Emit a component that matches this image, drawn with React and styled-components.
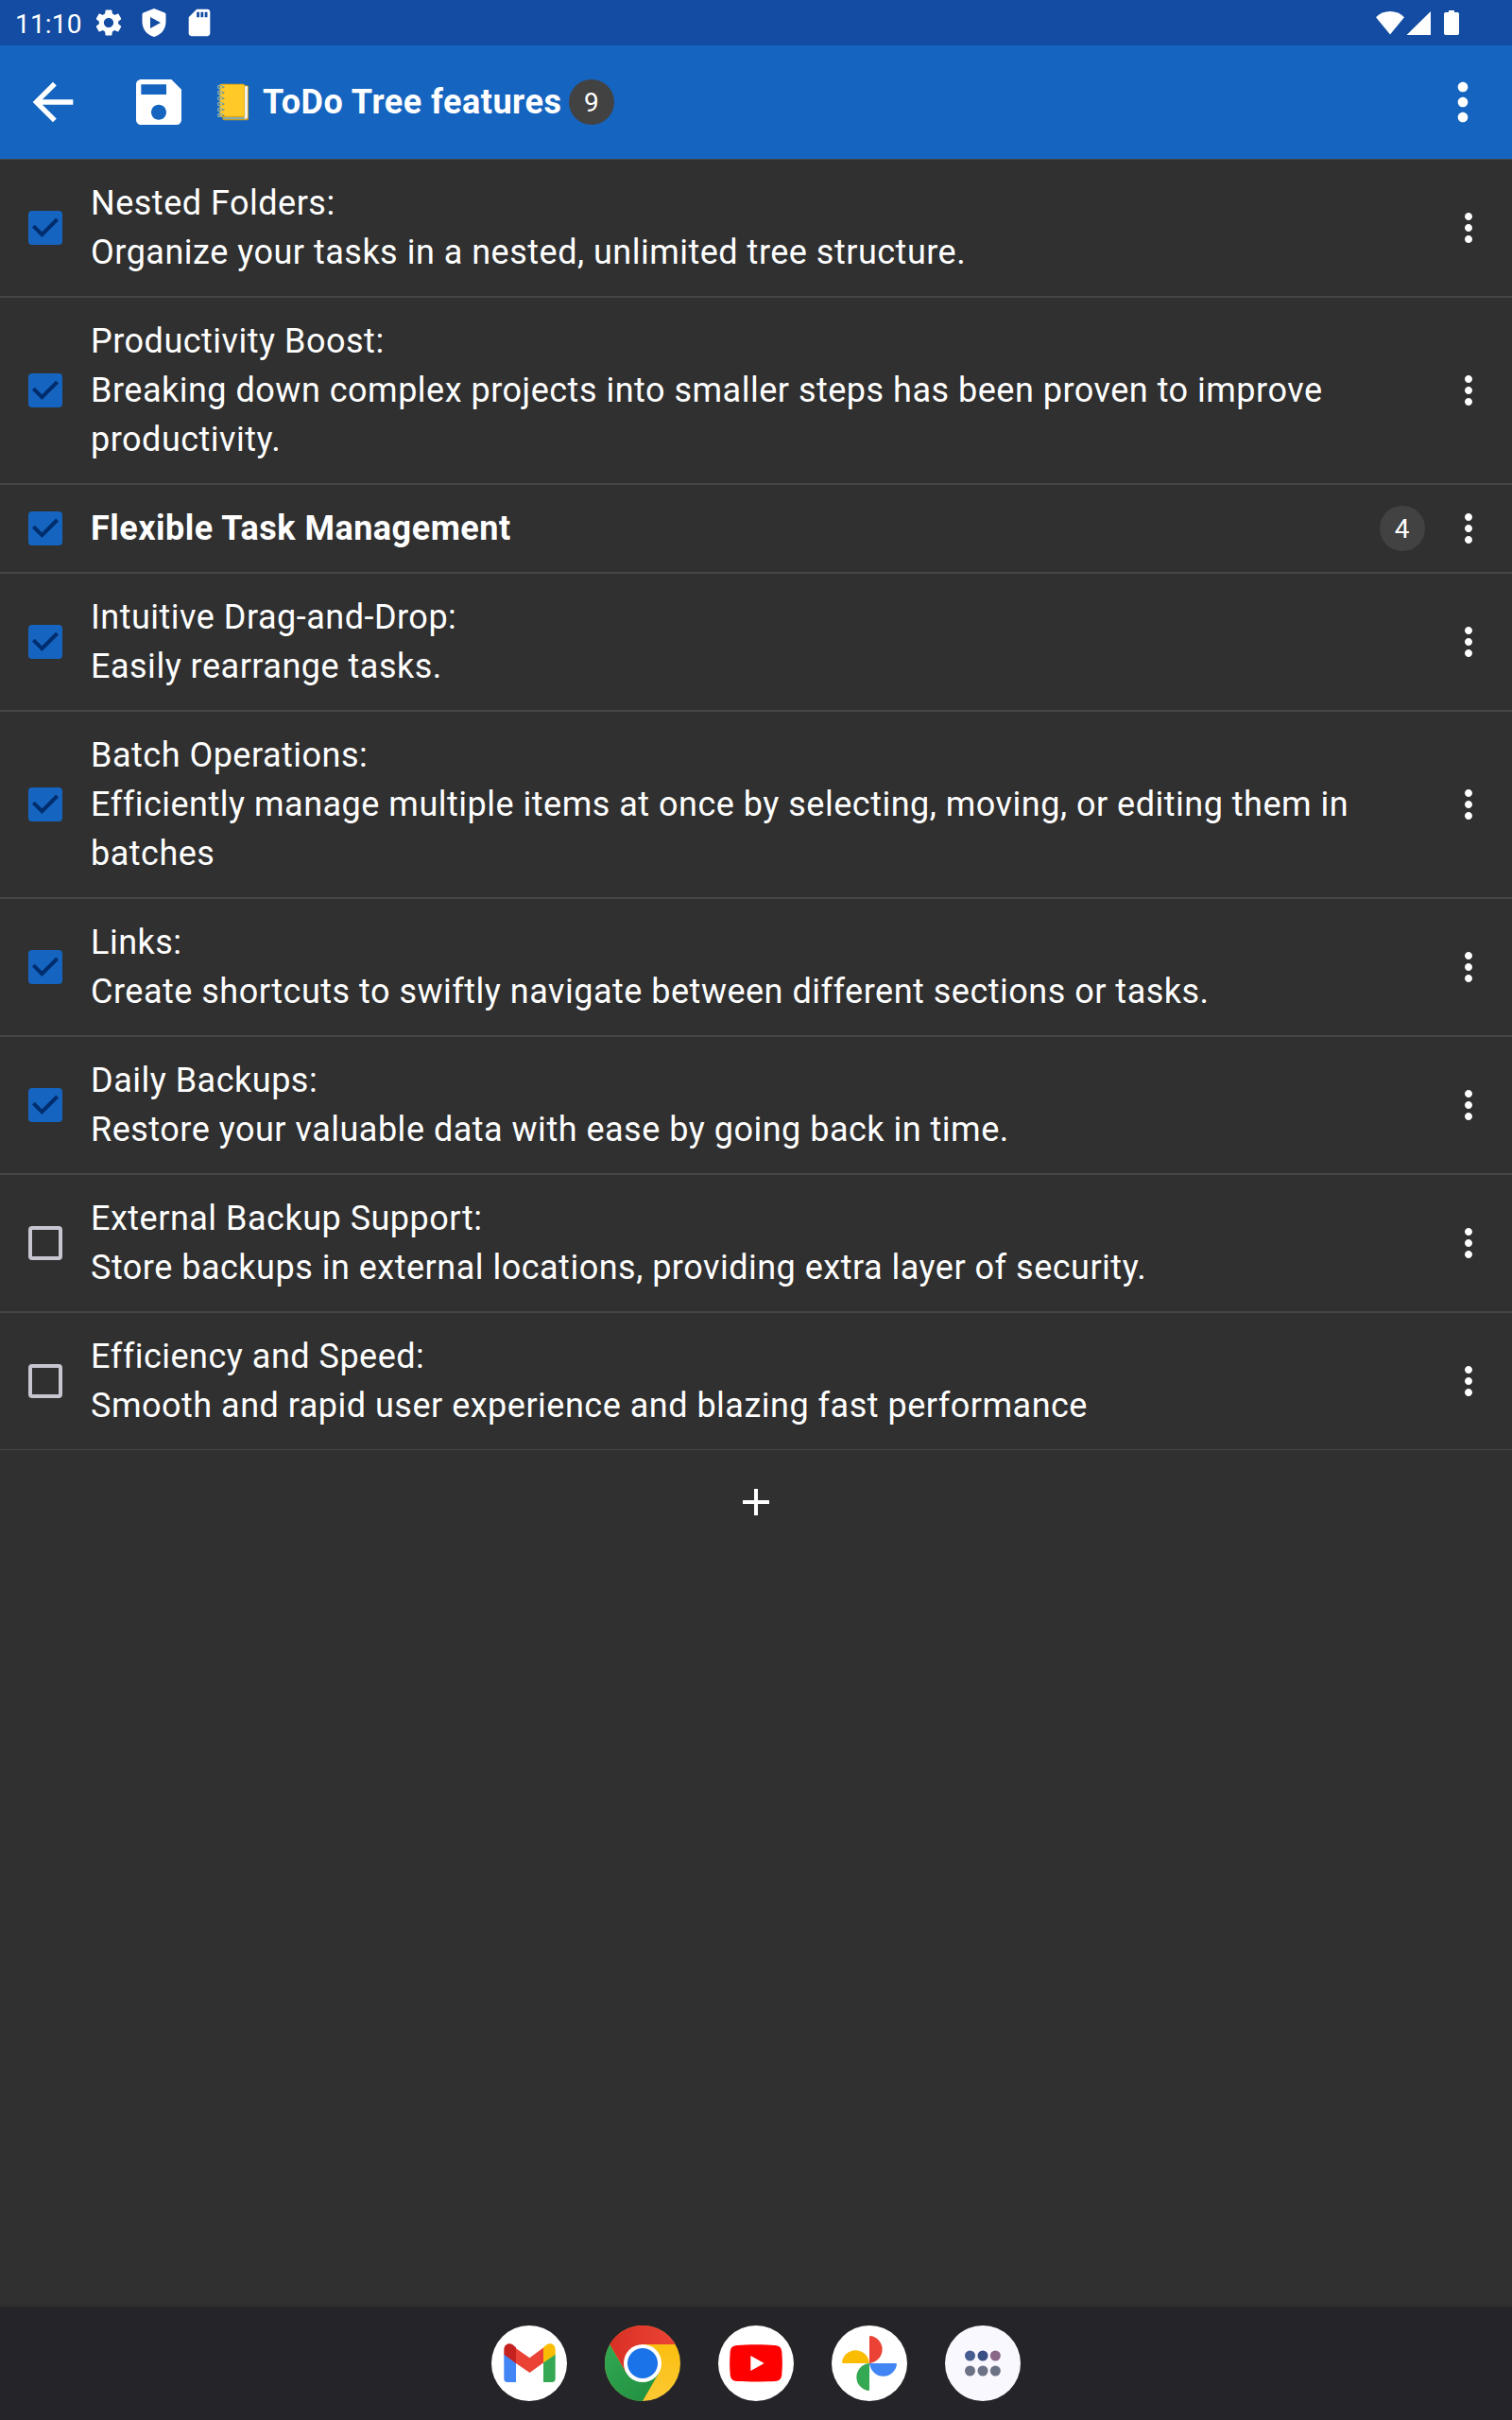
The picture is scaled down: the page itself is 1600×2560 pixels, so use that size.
import React from "react";
import styled, { createGlobalStyle } from "styled-components";

const GlobalStyle = createGlobalStyle`
  * { box-sizing: border-box; }
  body {
    margin: 0;
    background: #303030;
    color: #fff;
    font-family: Roboto, "Liberation Sans", sans-serif;
  }
  svg { display: block; flex: none; }
`;

const Screen = styled.div`
  display: flex;
  flex-direction: column;
  width: 1600px;
  height: 2560px;
  background: #303030;
`;

const StatusBar = styled.header`
  display: flex;
  align-items: center;
  flex: none;
  height: 48px;
  padding: 0 56px 0 16px;
  background: #134ca2;
`;

const Clock = styled.span`
  width: 82px;
  padding-top: 3px;
  font-size: 28px;
  letter-spacing: 0.2px;
  line-height: 33px;
`;

const StatusIcons = styled.div`
  display: flex;
  align-items: center;
  gap: 14px;
`;

const SystemIcons = styled(StatusIcons)`
  gap: 0;
  margin-left: auto;
`;

const AppBar = styled.div`
  display: flex;
  align-items: center;
  flex: none;
  height: 120px;
  padding: 0 20px 0 24px;
  background: #1565c0;
`;

const IconButton = styled.button`
  display: flex;
  align-items: center;
  justify-content: center;
  flex: none;
  width: ${({ $size }) => $size}px;
  height: ${({ $size }) => $size}px;
  margin: 0 ${({ $after = 0 }) => $after}px 0 0;
  padding: 0;
  border: 0;
  background: none;
  color: #fff;
`;

const Title = styled.h1`
  display: flex;
  align-items: center;
  flex: 1;
  margin: 0;
  font-size: 36px;
  font-weight: 700;
  line-height: 42px;
  white-space: nowrap;
`;

const TitleText = styled.span`
  margin: 0 8px 0 14px;
  letter-spacing: 0.5px;
`;

const Badge = styled.span`
  display: flex;
  align-items: center;
  justify-content: center;
  flex: none;
  width: 48px;
  height: 48px;
  padding-right: 1px;
  border-radius: 50%;
  background: #424242;
  font-size: 28px;
  font-weight: 400;
  line-height: 33px;
`;

const TaskList = styled.ul`
  margin: 0;
  padding: 0;
  list-style: none;
`;

const TaskRow = styled.li`
  display: flex;
  align-items: center;
  padding: 20px 22px 20px 30px;
  border: solid #464646;
  border-width: 1px 0;
`;

const CheckBox = styled.span`
  flex: none;
  width: 36px;
  height: 36px;
  margin-right: 30px;
  border: ${({ $checked }) => ($checked ? "0" : "4px solid #c7c5d0")};
  border-radius: 4px;
  background: ${({ $checked }) => ($checked ? "#1565c0" : "transparent")};
`;

const TaskText = styled.p`
  flex: 1;
  margin: 0;
  font-size: 36px;
  font-weight: ${({ $bold }) => ($bold ? 700 : 400)};
  letter-spacing: 0.5px;
  line-height: 52px;
  white-space: pre-line;
`;

const RowMenu = styled(IconButton)`
  margin-left: 22px;
`;

const AddRow = styled.div`
  display: flex;
  align-items: center;
  justify-content: center;
  height: 110px;
`;

const Dock = styled.nav`
  display: flex;
  align-items: center;
  justify-content: center;
  gap: 40px;
  flex: none;
  height: 120px;
  margin-top: auto;
  background: #252429;
`;

const Material = ({ size, d }) => (
  <svg width={size} height={size} viewBox="0 0 24 24" fill="currentColor">
    <path d={d} />
  </svg>
);

const ICONS = {
  back: "M20 11H7.83l5.59-5.59L12 4l-8 8 8 8 1.41-1.41L7.83 13H20v-2z",
  save: "M17 3H5c-1.11 0-2 .9-2 2v14c0 1.1.89 2 2 2h14c1.1 0 2-.9 2-2V7l-4-4zm-5 16c-1.66 0-3-1.34-3-3s1.34-3 3-3 3 1.34 3 3-1.34 3-3 3zm3-10H5V5h10v4z",
  more: "M12 8c1.1 0 2-.9 2-2s-.9-2-2-2-2 .9-2 2 .9 2 2 2zm0 2c-1.1 0-2 .9-2 2s.9 2 2 2 2-.9 2-2-.9-2-2-2zm0 6c-1.1 0-2 .9-2 2s.9 2 2 2 2-.9 2-2-.9-2-2-2z",
  add: "M19 13h-6v6h-2v-6H5v-2h6V5h2v6h6v2z",
  settings:
    "M19.14 12.94c.04-.3.06-.61.06-.94 0-.32-.02-.64-.07-.94l2.03-1.58c.18-.14.23-.41.12-.61l-1.92-3.32c-.12-.22-.37-.29-.59-.22l-2.39.96c-.5-.38-1.03-.7-1.62-.94l-.36-2.54c-.04-.24-.24-.41-.48-.41h-3.84c-.24 0-.43.17-.47.41l-.36 2.54c-.59.24-1.13.57-1.62.94l-2.39-.96c-.22-.08-.47 0-.59.22L2.74 8.87c-.12.21-.08.47.12.61l2.03 1.58c-.05.3-.09.63-.09.94s.02.64.07.94l-2.03 1.58c-.18.14-.23.41-.12.61l1.92 3.32c.12.22.37.29.59.22l2.39-.96c.5.38 1.03.7 1.62.94l.36 2.54c.05.24.24.41.48.41h3.84c.24 0 .44-.17.47-.41l.36-2.54c.59-.24 1.13-.56 1.62-.94l2.39.96c.22.08.47 0 .59-.22l1.92-3.32c.12-.22.07-.47-.12-.61l-2.01-1.58zM12 15.6c-1.98 0-3.6-1.62-3.6-3.6s1.62-3.6 3.6-3.6 3.6 1.62 3.6 3.6-1.62 3.6-3.6 3.6z",
  sdCard:
    "M18 2h-8L4.02 8 4 20c0 1.1.9 2 2 2h12c1.1 0 2-.9 2-2V4c0-1.1-.9-2-2-2zm-6 6h-2V4h2v4zm3 0h-2V4h2v4zm3 0h-2V4h2v4z",
};

const ShieldIcon = () => (
  <svg width="34" height="34" viewBox="0 0 34 34">
    <path
      fill="#fff"
      fillRule="evenodd"
      d="M17 2 28.4 6.4Q29.5 6.9 29.5 8V16C29.5 23.5 25 29.7 17 32C9 29.7 4.500 23.5 4.500 16V8Q4.500 6.900 5.600 6.400ZM13 11V23L24 17Z"
    />
  </svg>
);

const WifiIcon = () => (
  <svg width="30" height="26" viewBox="0 0 30 26">
    <path fill="#fff" d="M15 25.500 0 7.300C4 3.200 9.300 1 15 1S26 3.200 30 7.300Z" />
  </svg>
);

const SignalIcon = () => (
  <svg width="42" height="26" viewBox="0 0 42 26">
    <path fill="#fff" d="M2.500 26 28 1V26Z" />
  </svg>
);

const BatteryIcon = () => (
  <svg width="16" height="26" viewBox="0 0 16 26">
    <path fill="#fff" d="M5 0H11V2H14.300Q16 2 16 3.700V24.300Q16 26 14.300 26H1.700Q0 26 0 24.300V3.700Q0 2 1.700 2H5Z" />
  </svg>
);

const CheckMark = () => (
  <svg width="36" height="36" viewBox="0 0 36 36">
    <path d="M5.400 16.200 14.400 25.200 30.600 9" fill="none" stroke="#002d6d" strokeWidth="4" />
  </svg>
);

const RINGS = [274, 292, 310, 328, 346, 363];

const LedgerIcon = () => (
  <svg width="34" height="40" viewBox="690 263 102 120">
    <path d="M706 270H784Q789 270 789 276V375Q789 381 783 381H712Q706 381 706 374Z" fill="#c99a1c" />
    <path d="M708 369H777V377H713Q708 377 708 372Z" fill="#82aeb5" />
    <path d="M776 273H786V370Q786 376 780 376H776Z" fill="#f2f2f2" />
    <path d="M702 265H771Q777 265 777 271V366Q777 371 771 371H702Q697 371 697 366V270Q697 265 702 265Z" fill="#e2a610" />
    <path d="M702 268H775V367H702Q699 367 699 364V271Q699 268 702 268Z" fill="#ffca28" />
    {RINGS.map((y) => (
      <g key={y} fill="none" strokeLinecap="round">
        <circle cx="709" cy={y + 2} r="3" fill="#8a6d1a" />
        <path d={`M710 ${y + 1}C702 ${y - 6} 690 ${y - 5} 691 ${y + 2}C692 ${y + 7} 699 ${y + 6} 703 ${y + 4}`} stroke="#82aeb5" strokeWidth="4" />
      </g>
    ))}
  </svg>
);

const GmailIcon = () => (
  <svg width="80" height="80" viewBox="60 120 240 240">
    <circle cx="180" cy="240" r="120" fill="#fff" />
    <path d="M100 210 138 238V300H111Q100 300 100 289Z" fill="#4285f4" />
    <path d="M263 210 225 238V300H252Q263 300 263 289Z" fill="#34a853" />
    <path d="M137 192 181.500 223 226 190V238L181.500 270 137 239Z" fill="#ea4335" />
    <path d="M100 212V197C100 179 118 172 131 184L138 190V240Z" fill="#c5221f" />
    <path d="M263 212V197C263 179 246 172 232 184L225 190V238Z" fill="#fbbc04" />
  </svg>
);

const ChromeIcon = () => (
  <svg width="80" height="80" viewBox="420 120 240 240">
    <defs>
      <linearGradient id="chromeRed" x1="0" x2="1">
        <stop offset="0" stopColor="#d93025" />
        <stop offset="1" stopColor="#ea4335" />
      </linearGradient>
      <linearGradient id="chromeGreen" x1="1" y1="1" x2="0" y2="0">
        <stop offset="0" stopColor="#1e8e3e" />
        <stop offset="1" stopColor="#34a853" />
      </linearGradient>
      <linearGradient id="chromeYellow" x1="0" y1="1" x2="0" y2="0">
        <stop offset="0" stopColor="#fcc934" />
        <stop offset="1" stopColor="#fbbc04" />
      </linearGradient>
    </defs>
    <circle cx="540" cy="240" r="120" fill="url(#chromeYellow)" />
    <path d="M436 180 488 270 540 240 592 270 540 360A120 120 0 0 1 436 180Z" fill="url(#chromeGreen)" />
    <path d="M436 180A120 120 0 0 1 644 180H540V240L488 270Z" fill="url(#chromeRed)" />
    <circle cx="540" cy="240" r="60" fill="#fff" />
    <circle cx="540" cy="240" r="48" fill="#1a73e8" />
  </svg>
);

const YouTubeIcon = () => (
  <svg width="80" height="80" viewBox="60 120 240 240">
    <circle cx="180" cy="240" r="120" fill="#fff" />
    <path
      d="M180 181C205 181 225 182 240 183C255 184 261 191 262 205C264 228 264 252 262 275C261 289 255 296 240 297C205 299 155 299 120 297C105 296 99 289 98 275C96 252 96 228 98 205C99 191 105 184 120 183C135 182 155 181 180 181Z"
      fill="#f00"
    />
    <path d="M163 216 206 240 163 264Z" fill="#fff" />
  </svg>
);

const PhotosIcon = () => (
  <svg width="80" height="80" viewBox="420 120 240 240">
    <circle cx="540" cy="240" r="120" fill="#fff" />
    <path d="M540 240V157Q540 153 544 153A43.500 43.500 0 0 1 544 239Z" fill="#ea4335" />
    <path d="M540 240H623Q627 240 627 244A43.500 43.500 0 0 1 541 244Z" fill="#4285f4" />
    <path d="M540 240V323Q540 327 536 327A43.500 43.500 0 0 1 536 241Z" fill="#34a853" />
    <path d="M540 240H457Q453 240 453 236A43.500 43.500 0 0 1 539 236Z" fill="#fbbc04" />
  </svg>
);

const APP_DOTS = [
  [859.5, 216, "#475d92"],
  [900, 216, "#3a4f84"],
  [940, 216, "#8a6788"],
  [859.5, 264, "#6c7285"],
  [900, 264, "#6c7285"],
  [940, 264, "#6c7285"],
];

const AllAppsIcon = () => (
  <svg width="80" height="80" viewBox="780 120 240 240">
    <circle cx="900" cy="240" r="120" fill="#faf8ff" />
    {APP_DOTS.map(([x, y, color]) => (
      <circle key={`${x}-${y}`} cx={x} cy={y} r="16.500" fill={color} />
    ))}
  </svg>
);

const TASKS = [
  { done: true, text: "Nested Folders:\nOrganize your tasks in a nested, unlimited tree structure." },
  { done: true, text: "Productivity Boost:\nBreaking down complex projects into smaller steps has been proven to improve productivity." },
  { done: true, text: "Flexible Task Management", count: 4 },
  { done: true, text: "Intuitive Drag-and-Drop:\nEasily rearrange tasks." },
  { done: true, text: "Batch Operations:\nEfficiently manage multiple items at once by selecting, moving, or editing them in batches" },
  { done: true, text: "Links:\nCreate shortcuts to swiftly navigate between different sections or tasks." },
  { done: true, text: "Daily Backups:\nRestore your valuable data with ease by going back in time." },
  { done: false, text: "External Backup Support:\nStore backups in external locations, providing extra layer of security." },
  { done: false, text: "Efficiency and Speed:\nSmooth and rapid user experience and blazing fast performance" },
];

const Task = ({ done, text, count }) => (
  <TaskRow>
    <CheckBox $checked={done}>{done && <CheckMark />}</CheckBox>
    <TaskText $bold={Boolean(count)}>{text}</TaskText>
    {count && <Badge>{count}</Badge>}
    <RowMenu $size={48}>
      <Material size={48} d={ICONS.more} />
    </RowMenu>
  </TaskRow>
);

export default function App() {
  return (
    <>
      <GlobalStyle />
      <Screen>
        <StatusBar>
          <Clock>11:10</Clock>
          <StatusIcons>
            <Material size={34} d={ICONS.settings} />
            <ShieldIcon />
            <Material size={34} d={ICONS.sdCard} />
          </StatusIcons>
          <SystemIcons>
            <WifiIcon />
            <SignalIcon />
            <BatteryIcon />
          </SystemIcons>
        </StatusBar>
        <AppBar>
          <IconButton $size={64} $after={48}>
            <Material size={64} d={ICONS.back} />
          </IconButton>
          <IconButton $size={64} $after={30}>
            <Material size={64} d={ICONS.save} />
          </IconButton>
          <Title>
            <LedgerIcon />
            <TitleText>ToDo Tree features</TitleText>
            <Badge>9</Badge>
          </Title>
          <IconButton $size={64}>
            <Material size={64} d={ICONS.more} />
          </IconButton>
        </AppBar>
        <TaskList>
          {TASKS.map((task) => (
            <Task key={task.text} {...task} />
          ))}
        </TaskList>
        <AddRow>
          <IconButton $size={48}>
            <Material size={48} d={ICONS.add} />
          </IconButton>
        </AddRow>
        <Dock>
          <GmailIcon />
          <ChromeIcon />
          <YouTubeIcon />
          <PhotosIcon />
          <AllAppsIcon />
        </Dock>
      </Screen>
    </>
  );
}
